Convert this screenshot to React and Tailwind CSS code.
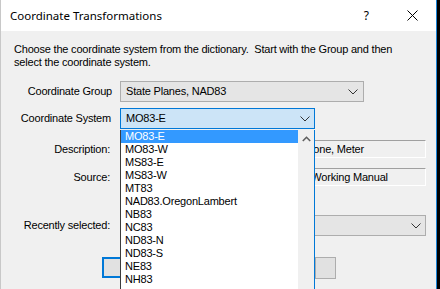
import React from "react";

const items = [
  "MO83-E",
  "MO83-W",
  "MS83-E",
  "MS83-W",
  "MT83",
  "NAD83.OregonLambert",
  "NB83",
  "NC83",
  "ND83-N",
  "ND83-S",
  "NE83",
  "NH83",
];

function Chevron({ className = "" }) {
  return (
    <svg width="10" height="6" viewBox="0 0 10 6" className={className}>
      <path d="M0.5 0.5 L5 5 L9.5 0.5" fill="none" stroke="#333" strokeWidth="1" />
    </svg>
  );
}

export default function App() {
  const font = { fontFamily: '"Liberation Sans", Arial, sans-serif' };
  return (
    <div className="w-[440px] h-[289px] bg-black flex overflow-hidden" style={font}>
      <div className="w-[437px] h-full flex flex-col border-l border-l-[#c8c8c8] border-r border-r-[#1883d7] relative">
        {/* Title bar */}
        <div className="h-[31px] bg-white flex items-center shrink-0">
          <span
            className="ml-[9px] text-[11.5px] text-black"
            style={{ fontFamily: '"Noto Sans", "Open Sans", sans-serif' }}
          >
            Coordinate Transformations
          </span>
          <span
            className="ml-auto mr-[38px] text-[12px] text-black"
            style={{ fontFamily: '"Noto Sans", sans-serif' }}
          >
            ?
          </span>
          <svg width="11" height="11" viewBox="0 0 11 11" className="mr-[18px]">
            <path d="M0.5 0.5 L10.5 10.5 M10.5 0.5 L0.5 10.5" stroke="#000" strokeWidth="1" />
          </svg>
        </div>

        {/* Body */}
        <div className="flex-1 bg-[#f0f0f0] flex flex-col text-[11px] tracking-[-0.2px] text-black">
          <p className="pt-[12px] pl-[13px] pr-[30px] leading-[12.5px]">
            Choose the coordinate system from the dictionary.&nbsp; Start with the Group and then select the coordinate system.
          </p>

          {/* Group row */}
          <div className="flex items-center mt-[13px]">
            <div className="w-[111px] text-right">Coordinate Group</div>
            <div className="ml-[8px] w-[244px] h-[21px] bg-[#e5e5e5] border border-[#adadad] flex items-center pl-[5px] pr-[5px]">
              <span>State Planes, NAD83</span>
              <Chevron className="ml-auto" />
            </div>
          </div>

          {/* System row */}
          <div className="flex items-center mt-[6px]">
            <div className="w-[110px] text-right">Coordinate System</div>
            <div className="ml-[9px] w-[195px] h-[21px] bg-[#cce4f7] border border-[#0078d7] flex items-center pl-[5px] pr-[4px]">
              <span>MO83-E</span>
              <Chevron className="ml-auto" />
            </div>
          </div>

          {/* Description row */}
          <div className="flex items-center mt-[11px]">
            <div className="w-[109px] text-right">Description:</div>
            <div className="ml-[10px] w-[306px] h-[18px] border-t border-t-[#a0a0a0] border-b border-b-white border-l border-l-[#a0a0a0] border-r border-r-white flex items-center pl-[9px] overflow-hidden whitespace-nowrap">
              Missouri Coordinate System 83, East Zone, Meter
            </div>
          </div>

          {/* Source row */}
          <div className="flex items-center mt-[10px]">
            <div className="w-[109px] text-right">Source:</div>
            <div className="ml-[10px] w-[306px] h-[18px] border-t border-t-[#a0a0a0] border-b border-b-white border-l border-l-[#a0a0a0] border-r border-r-white flex items-center pl-[6px] overflow-hidden whitespace-nowrap">
              NOAA Manual NOS NGS 5 - SPCS 83 Working Manual
            </div>
          </div>

          {/* Recently selected row */}
          <div className="flex items-center mt-[29px]">
            <div className="w-[109px] text-right">Recently selected:</div>
            <div className="ml-[10px] w-[306px] h-[21px] bg-[#e5e5e5] border border-[#adadad] flex items-center pl-[5px] pr-[4px]">
              <span></span>
              <Chevron className="ml-auto" />
            </div>
          </div>

          {/* Buttons */}
          <div className="flex mt-[21px] pl-[101px]">
            <button className="w-[90px] h-[21px] bg-[#e1e1e1] border-2 border-[#0078d7] text-[11px]">OK</button>
            <button className="ml-[123px] w-[21px] h-[22px] bg-[#e1e1e1] border border-[#adadad] text-[11px]"></button>
          </div>
        </div>

        {/* Dropdown list overlay */}
        <div className="absolute left-[119px] top-[130px] w-[195px] h-[165px] bg-white border-l border-l-[#3c3c3c] border-r border-r-[#0078d7] flex text-[11px] tracking-[-0.2px]">
          <div className="flex-1 flex flex-col">
            {items.map((it, i) => (
              <div
                key={it}
                className={
                  "h-[13px] leading-[13px] pl-[4px] whitespace-nowrap " +
                  (i === 0 ? "bg-[#3399ff] text-white" : "text-black")
                }
              >
                {it}
              </div>
            ))}
          </div>
          <div className="w-[16px] bg-[#f0f0f0] flex flex-col">
            <div className="h-[17px] flex items-center justify-center">
              <svg width="9" height="6" viewBox="0 0 9 6">
                <path d="M0.8 5 L4.5 1.3 L8.2 5" fill="none" stroke="#606060" strokeWidth="1.6" />
              </svg>
            </div>
          </div>
        </div>
      </div>
    </div>
  );
}
